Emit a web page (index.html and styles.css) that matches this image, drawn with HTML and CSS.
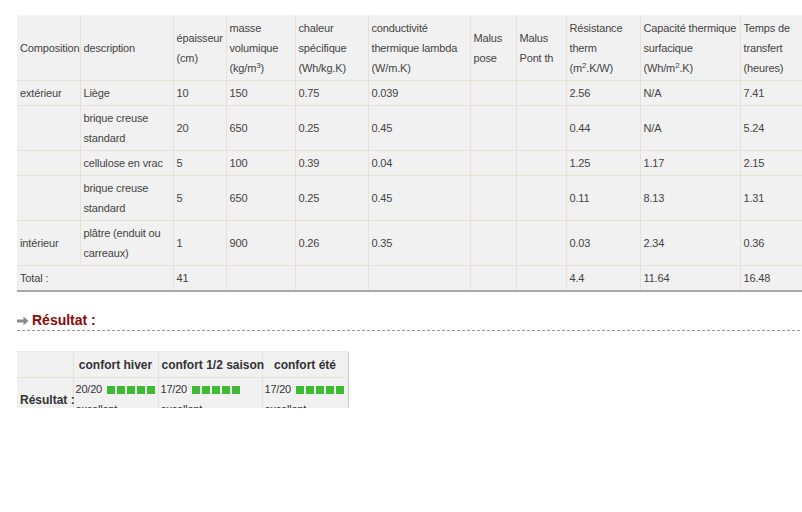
FILE: index.html
```html
<!DOCTYPE html>
<html lang="fr">
<head>
<meta charset="utf-8">
<title>Composition</title>
<link rel="stylesheet" href="styles.css">
</head>
<body>
<div class="page">
  <table class="compo">
    <colgroup>
      <col style="width:63px"><col style="width:93px"><col style="width:53px"><col style="width:69px"><col style="width:73px"><col style="width:102px"><col style="width:46px"><col style="width:50px"><col style="width:74px"><col style="width:100px"><col style="width:62px">
    </colgroup>
    <thead>
      <tr>
        <th>Composition</th>
        <th>description</th>
        <th>épaisseur (cm)</th>
        <th>masse volumique (kg/m<sup>3</sup>)</th>
        <th>chaleur spécifique (Wh/kg.K)</th>
        <th>conductivité thermique lambda (W/m.K)</th>
        <th>Malus pose</th>
        <th>Malus Pont th</th>
        <th>Résistance therm (m<sup>2</sup>.K/W)</th>
        <th>Capacité thermique surfacique (Wh/m<sup>2</sup>.K)</th>
        <th>Temps de transfert (heures)</th>
      </tr>
    </thead>
    <tbody>
      <tr><td>extérieur</td><td>Liège</td><td>10</td><td>150</td><td>0.75</td><td>0.039</td><td></td><td></td><td>2.56</td><td>N/A</td><td>7.41</td></tr>
      <tr><td></td><td>brique creuse standard</td><td>20</td><td>650</td><td>0.25</td><td>0.45</td><td></td><td></td><td>0.44</td><td>N/A</td><td>5.24</td></tr>
      <tr><td></td><td>cellulose en vrac</td><td>5</td><td>100</td><td>0.39</td><td>0.04</td><td></td><td></td><td>1.25</td><td>1.17</td><td>2.15</td></tr>
      <tr><td></td><td>brique creuse standard</td><td>5</td><td>650</td><td>0.25</td><td>0.45</td><td></td><td></td><td>0.11</td><td>8.13</td><td>1.31</td></tr>
      <tr><td>intérieur</td><td>plâtre (enduit ou carreaux)</td><td>1</td><td>900</td><td>0.26</td><td>0.35</td><td></td><td></td><td>0.03</td><td>2.34</td><td>0.36</td></tr>
    </tbody>
    <tfoot>
      <tr><td colspan="2">Total :</td><td>41</td><td></td><td></td><td></td><td></td><td></td><td>4.4</td><td>11.64</td><td>16.48</td></tr>
    </tfoot>
  </table>

  <h2 class="section-title">
    <svg class="arrow" width="12" height="10" viewBox="0 0 12 10"><path d="M0 3.6h6.5V0.5L11.5 5 6.5 9.5V6.4H0z" fill="#8a8a8a"/></svg>
    <span>Résultat :</span>
  </h2>

  <div class="result-clip">
    <table class="result">
      <colgroup><col style="width:56px"><col style="width:85px"><col style="width:104px"><col style="width:86px"></colgroup>
      <thead>
        <tr><th></th><th>confort hiver</th><th>confort 1/2 saison</th><th>confort été</th></tr>
      </thead>
      <tbody>
        <tr>
          <th class="rowhead">Résultat :</th>
          <td>20/20 <span class="bar"><i></i><i></i><i></i><i></i><i></i></span><br>excellent</td>
          <td>17/20 <span class="bar"><i></i><i></i><i></i><i></i><i></i></span><br>excellent</td>
          <td>17/20 <span class="bar"><i></i><i></i><i></i><i></i><i></i></span><br>excellent</td>
        </tr>
      </tbody>
    </table>
  </div>
</div>
</body>
</html>
```

FILE: styles.css
```css
html, body {
  margin: 0;
  padding: 0;
  background: #fff;
}
body {
  font-family: "Liberation Sans", Arial, sans-serif;
  font-size: 11px;
  color: #444;
}
.page {
  padding: 15px 0 0 17px;
}
table {
  border-collapse: collapse;
  table-layout: fixed;
}
.compo {
  width: 785px;
  background: #f1f1f1;
  border-top: 1px solid #f6f5f0;
  border-bottom: 2px solid #a9a9a9;
}
.compo th, .compo td {
  border-left: 1px solid #e6e3d4;
  border-bottom: 1px solid #e6e3d4;
  padding: 2px 0 2px 3px;
  line-height: 20px;
  text-align: left;
  vertical-align: middle;
  font-weight: normal;
  letter-spacing: -0.15px;
}
.compo th:first-child, .compo td:first-child {
  border-left: none;
}
.compo tfoot td {
  border-bottom: none;
}
sup {
  font-size: 8px;
  line-height: 0;
  vertical-align: 4px;
}
.section-title {
  display: flex;
  align-items: center;
  gap: 3px;
  margin: 20px 2px 0 0;
  padding: 0 0 2px 0;
  border-bottom: 1px dashed #9a9a9a;
  font-size: 14px;
  line-height: 16px;
  color: #8b0a0a;
}
.arrow {
  flex: none;
  margin-top: 1px;
}
.result-clip {
  margin-top: 20px;
  height: 57px;
  overflow: hidden;
}
.result {
  width: 331px;
  background: #f1f1f1;
  border-right: 1px solid #c7c7c7;
}
.result th, .result td {
  border-left: 1px solid #e6e3d4;
  border-bottom: 1px solid #e6e3d4;
  padding: 2px 3px;
  line-height: 20px;
  white-space: nowrap;
}
.result th:first-child, .result td:first-child {
  border-left: none;
}
.result thead th {
  font-size: 12px;
  font-weight: bold;
  color: #333;
  text-align: center;
  height: 21px;
  border-top: 1px solid #ecebe4;
}
.result .rowhead {
  font-size: 12px;
  font-weight: bold;
  color: #333;
  text-align: left;
  vertical-align: middle;
  height: 40px;
}
.result td {
  vertical-align: top;
  text-align: left;
  color: #333;
  padding: 1px 2px;
  letter-spacing: -0.2px;
}
.bar {
  display: inline-flex;
  gap: 2px;
  margin-left: 2px;
  vertical-align: -1px;
}
.bar i {
  display: block;
  width: 8px;
  height: 8px;
  background: #3dbb33;
}
```
